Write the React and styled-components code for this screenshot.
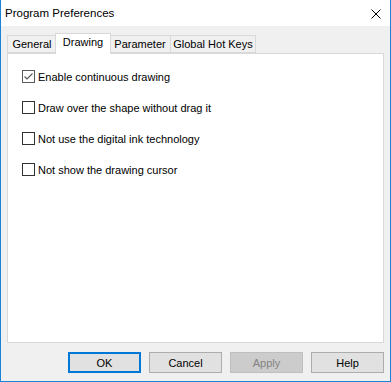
import React, { useState } from "react";
import styled, { createGlobalStyle } from "styled-components";

const Global = createGlobalStyle`
  html, body { margin: 0; padding: 0; background: #ffffff; }
  * { box-sizing: border-box; }
`;

const FONT = `"Segoe UI", "Liberation Sans", Arial, sans-serif`;

const Window = styled.div`
  width: 391px;
  height: 382px;
  border: 1px solid #1883d7;
  border-top: none;
  background: #f0f0f0;
  display: flex;
  flex-direction: column;
  font-family: ${FONT};
  font-size: 11px;
  color: #000;
`;

const TitleBar = styled.div`
  height: 26px;
  background: #ffffff;
  display: flex;
  align-items: center;
  justify-content: space-between;
  padding: 0 9px 0 4px;
  flex-shrink: 0;
`;

const Title = styled.div`
  font-size: 11.5px;
  padding-bottom: 1px;
`;

const CloseButton = styled.div`
  width: 10px;
  height: 10px;
  display: flex;
  margin-top: 1px;
`;

const Body = styled.div`
  flex: 1;
  display: flex;
  flex-direction: column;
  padding: 7px 6px 8px 6px;
  min-height: 0;
`;

const TabRow = styled.div`
  height: 20px;
  display: flex;
  align-items: flex-end;
  position: relative;
  z-index: 1;
`;

const Tab = styled.div`
  height: ${(p) => (p.$active ? "21px" : "18px")};
  width: ${(p) => p.$w}px;
  margin: 0 ${(p) => (p.$active ? "-2px" : "0")};
  margin-bottom: ${(p) => (p.$active ? "-1px" : "0")};
  background: ${(p) => (p.$active ? "#ffffff" : "#f0f0f0")};
  border: 1px solid #d9d9d9;
  border-bottom: ${(p) => (p.$active ? "none" : "1px solid #d9d9d9")};
  border-left: ${(p) => (p.$noLeft ? "none" : "1px solid #d9d9d9")};
  display: flex;
  align-items: ${(p) => (p.$active ? "flex-start" : "center")};
  justify-content: center;
  padding-top: ${(p) => (p.$active ? "2px" : "0")};
  position: relative;
  z-index: ${(p) => (p.$active ? 2 : 1)};
  white-space: nowrap;
`;

const Panel = styled.div`
  flex: 1;
  background: #ffffff;
  border: 1px solid #d9d9d9;
  padding: 16px 14px;
  display: flex;
  flex-direction: column;
  gap: 18px;
  min-height: 0;
`;

const CheckRow = styled.label`
  display: flex;
  align-items: center;
  height: 13px;
  gap: 3px;
  white-space: nowrap;
`;

const Box = styled.span`
  width: 13px;
  height: 13px;
  border: 1px solid ${(p) => (p.$checked ? "#5a5a5a" : "#333333")};
  background: #ffffff;
  display: flex;
  align-items: center;
  justify-content: center;
  flex-shrink: 0;
`;

const ButtonRow = styled.div`
  display: flex;
  justify-content: flex-end;
  gap: 8px;
  margin-top: 9px;
`;

const Button = styled.div`
  width: 73px;
  height: 21px;
  display: flex;
  align-items: center;
  justify-content: center;
  background: ${(p) => (p.$disabled ? "#cccccc" : "#e1e1e1")};
  color: ${(p) => (p.$disabled ? "#838383" : "#000000")};
  border: ${(p) =>
    p.$default ? "2px solid #0078d7" : p.$disabled ? "1px solid #bfbfbf" : "1px solid #adadad"};
`;

const tabs = [
  { label: "General", w: 50 },
  { label: "Drawing", w: 56, active: true },
  { label: "Parameter", w: 62 },
  { label: "Global Hot Keys", w: 85 },
];

const options = [
  { label: "Enable continuous drawing", checked: true },
  { label: "Draw over the shape without drag it", checked: false },
  { label: "Not use the digital ink technology", checked: false },
  { label: "Not show the drawing cursor", checked: false },
];

function Check({ checked }) {
  return (
    <Box $checked={checked}>
      {checked && (
        <svg width="11" height="11" viewBox="0 0 11 11">
          <polyline points="1.5,5.5 4,8 9.5,2.5" fill="none" stroke="#555555" strokeWidth="1.1" />
        </svg>
      )}
    </Box>
  );
}

export default function App() {
  const [opts, setOpts] = useState(options);
  return (
    <>
      <Global />
      <Window>
        <TitleBar>
          <Title>Program Preferences</Title>
          <CloseButton>
            <svg width="10" height="10" viewBox="0 0 10 10">
              <path d="M0.5 0.5 L9.5 9.5 M9.5 0.5 L0.5 9.5" stroke="#000" strokeWidth="1" />
            </svg>
          </CloseButton>
        </TitleBar>
        <Body>
          <TabRow>
            {tabs.map((t, i) => (
              <Tab
                key={t.label}
                $w={t.w}
                $active={t.active}
                $noLeft={!t.active && i > 0 && !tabs[i - 1].active}
              >
                {t.label}
              </Tab>
            ))}
          </TabRow>
          <Panel>
            {opts.map((o, i) => (
              <CheckRow
                key={o.label}
                onClick={() =>
                  setOpts(opts.map((x, j) => (j === i ? { ...x, checked: !x.checked } : x)))
                }
              >
                <Check checked={o.checked} />
                {o.label}
              </CheckRow>
            ))}
          </Panel>
          <ButtonRow>
            <Button $default>OK</Button>
            <Button>Cancel</Button>
            <Button $disabled>Apply</Button>
            <Button>Help</Button>
          </ButtonRow>
        </Body>
      </Window>
    </>
  );
}
